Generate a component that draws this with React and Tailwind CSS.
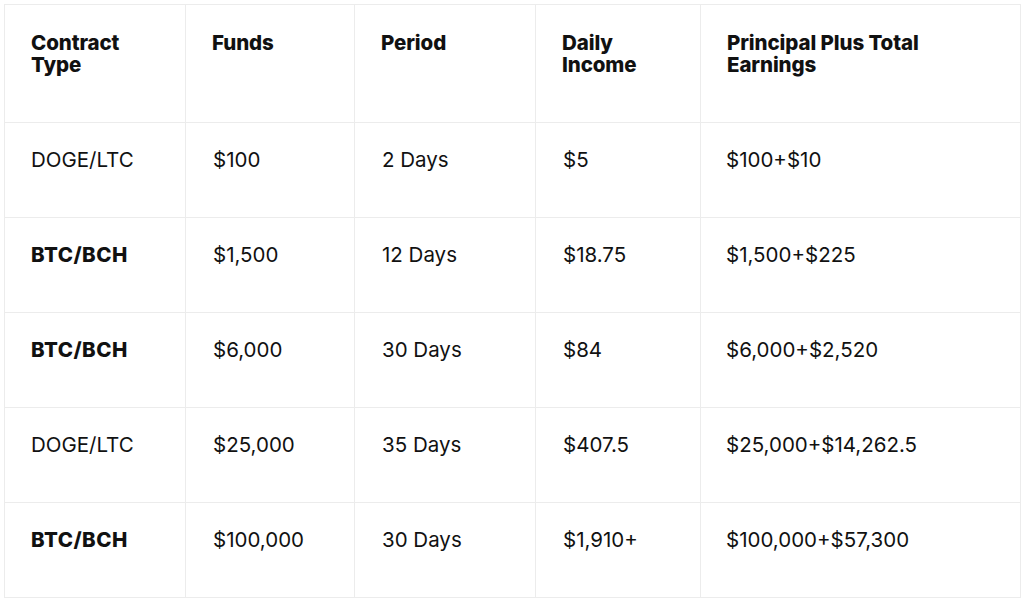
const HEAD = ['Contract Type', 'Funds', 'Period', 'Daily Income', 'Principal Plus Total Earnings']

const ROWS = [
  { type: 'DOGE/LTC', bold: false, funds: '$100', period: '2 Days', daily: '$5', total: '$100+$10' },
  { type: 'BTC/BCH', bold: true, funds: '$1,500', period: '12 Days', daily: '$18.75', total: '$1,500+$225' },
  { type: 'BTC/BCH', bold: true, funds: '$6,000', period: '30 Days', daily: '$84', total: '$6,000+$2,520' },
  { type: 'DOGE/LTC', bold: false, funds: '$25,000', period: '35 Days', daily: '$407.5', total: '$25,000+$14,262.5' },
  { type: 'BTC/BCH', bold: true, funds: '$100,000', period: '30 Days', daily: '$1,910+', total: '$100,000+$57,300' },
]

// column widths measured from the grid lines
const WIDTHS = ['w-[181px]', 'w-[169px]', 'w-[181px]', 'w-[165px]', 'w-[320px]']

export default function App() {
  return (
    <div className="w-[1024px] h-[598px] bg-white px-[4px] pt-[4px] font-['Inter',sans-serif] text-[#111111]">
      <table className="w-[1016px] table-fixed border-collapse border border-[#ececec]">
        <colgroup>
          {WIDTHS.map((w, i) => (
            <col key={i} className={w} />
          ))}
        </colgroup>
        <thead>
          <tr className="h-[118px]">
            {HEAD.map((h, i) => (
              <th
                key={h}
                className={`border border-[#ececec] align-top text-left pt-[27px] pl-[26px] ${
                  i === 4 ? 'pr-[60px]' : 'pr-[30px]'
                } text-[20.5px] leading-[22px] font-extrabold tracking-[-0.1px]`}
              >
                {h}
              </th>
            ))}
          </tr>
        </thead>
        <tbody>
          {ROWS.map((r, i) => (
            <tr key={i} className="h-[95px]">
              <td
                className={`border border-[#ececec] align-top pt-[25px] pl-[26px] text-[20.5px] leading-[24px] ${
                  r.bold ? 'font-extrabold tracking-[0.5px]' : 'font-normal'
                }`}
              >
                {r.type}
              </td>
              <td className="border border-[#ececec] align-top pt-[25px] pl-[27px] text-[20.5px] leading-[24px]">
                {r.funds}
              </td>
              <td className="border border-[#ececec] align-top pt-[25px] pl-[27px] text-[20.5px] leading-[24px]">
                {r.period}
              </td>
              <td className="border border-[#ececec] align-top pt-[25px] pl-[27px] text-[20.5px] leading-[24px]">
                {r.daily}
              </td>
              <td className="border border-[#ececec] align-top pt-[25px] pl-[25px] text-[20.5px] leading-[24px]">
                {r.total}
              </td>
            </tr>
          ))}
        </tbody>
      </table>
    </div>
  )
}
